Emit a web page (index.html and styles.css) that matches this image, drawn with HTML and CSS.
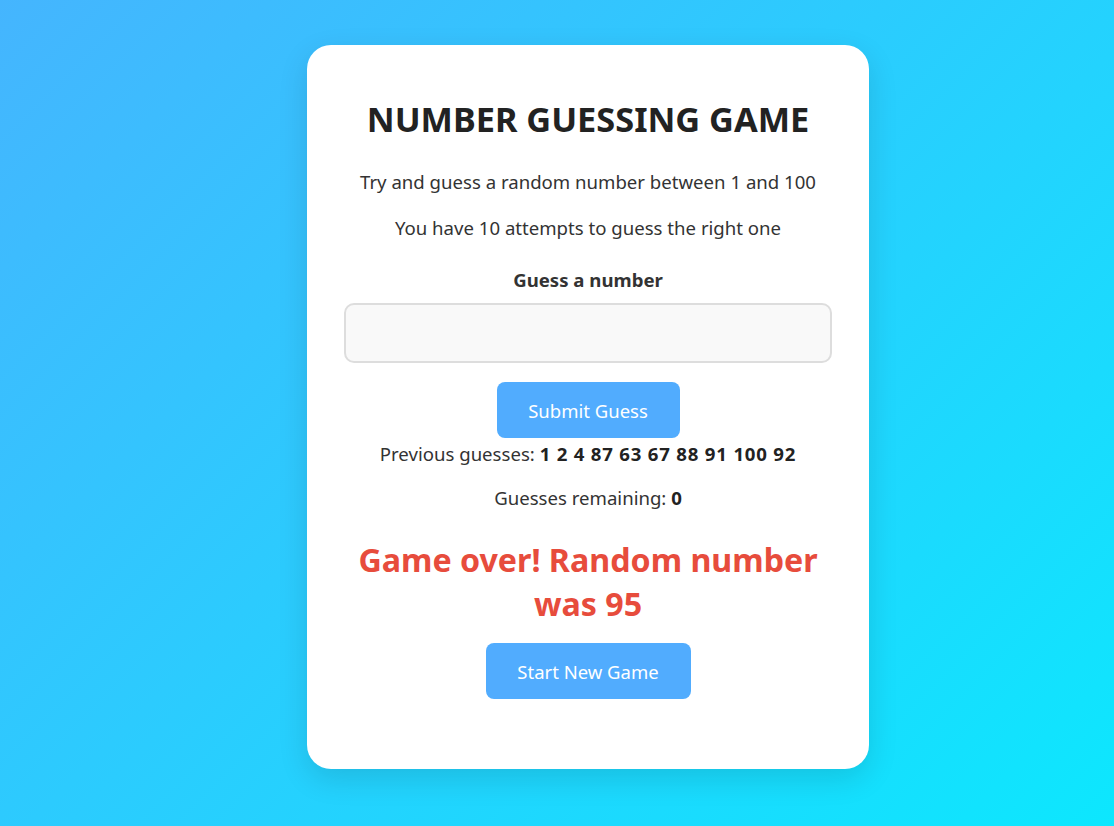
FILE: index.html
```html
<!DOCTYPE html>
<html lang="en">
<head>
<meta charset="utf-8">
<title>Number Guessing Game</title>
<link rel="stylesheet" href="styles.css">
</head>
<body>
<main class="card">
  <h1 class="title">NUMBER GUESSING GAME</h1>
  <p class="intro">Try and guess a random number between 1 and 100</p>
  <p class="intro">You have 10 attempts to guess the right one</p>
  <div class="form">
    <label class="label" for="guess">Guess a number</label>
    <input class="field" id="guess" type="number">
    <button class="btn btn-submit" type="button">Submit Guess</button>
  </div>
  <p class="stat">Previous guesses: <strong class="nums">1 2 4 87 63 67 88 91 100 92</strong></p>
  <p class="stat">Guesses remaining: <strong>0</strong></p>
  <p class="result">Game over! Random number was 95</p>
  <button class="btn btn-new" type="button">Start New Game</button>
</main>
</body>
</html>
```

FILE: styles.css
```css
html, body {
  margin: 0;
  padding: 0;
}
body {
  min-height: 100vh;
  background: linear-gradient(135deg, #4facfe -18%, #00f2fe 122%);
  font-family: "Noto Sans", "Open Sans", sans-serif;
  color: #333;
  box-sizing: border-box;
  padding: 45px 0 57px 307px;
}
.card {
  width: 562px;
  height: 724px;
  box-sizing: border-box;
  background: #fff;
  border-radius: 24px;
  box-shadow: 0 10px 30px rgba(0, 0, 0, 0.12);
  padding: 50px 37px 40px;
  display: flex;
  flex-direction: column;
  align-items: center;
  text-align: center;
}
.title {
  margin: 0;
  font-size: 34.3px;
  line-height: 48px;
  font-weight: 700;
  color: #222;
}
.intro {
  margin: 0;
  font-size: 18.6px;
  line-height: 26px;
  color: #333;
}
.title + .intro { margin-top: 26px; }
.intro + .intro { margin-top: 20px; }
.form {
  margin-top: 26px;
  width: 100%;
  display: flex;
  flex-direction: column;
  align-items: center;
}
.label {
  font-size: 18.6px;
  font-weight: 700;
  line-height: 26px;
  color: #333;
}
.field {
  margin-top: 10px;
  width: 100%;
  height: 60px;
  box-sizing: border-box;
  border: 2px solid #ddd;
  border-radius: 10px;
  background: #f9f9f9;
  font-size: 18px;
  padding: 0 14px;
}
.btn {
  border: 0;
  border-radius: 8px;
  background: #51acfe;
  color: #fff;
  font-family: inherit;
  font-size: 18.5px;
  height: 56px;
  padding: 0;
}
.btn-submit {
  margin-top: 19px;
  width: 183px;
}
.stat {
  margin: 0;
  font-size: 18.6px;
  line-height: 26px;
  color: #333;
}
.stat strong { color: #222; }
.nums { letter-spacing: 0.8px; }
.form + .stat { margin-top: 3px; }
.stat + .stat { margin-top: 18px; }
.result {
  margin: 27px 0 0;
  font-size: 32.2px;
  line-height: 44px;
  font-weight: 700;
  color: #e74c3c;
  width: 480px;
}
.btn-new {
  margin-top: 17px;
  width: 205px;
}
```
